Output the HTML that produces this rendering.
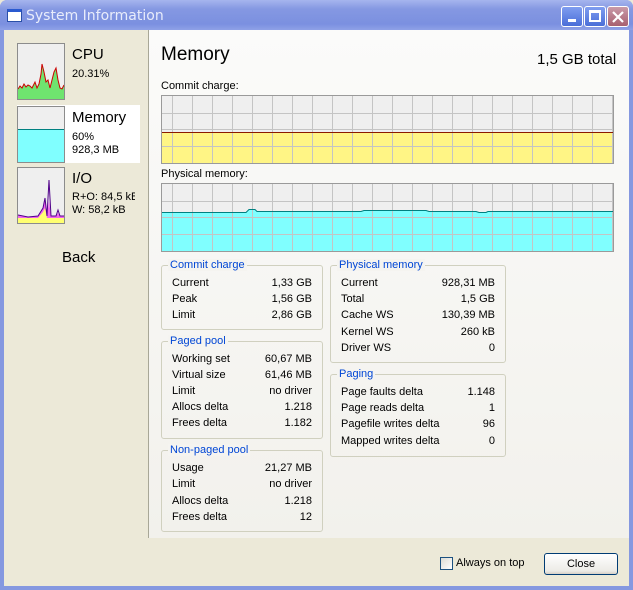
<!DOCTYPE html>
<html><head><meta charset="utf-8"><style>
*{margin:0;padding:0;box-sizing:border-box}
body{width:633px;height:590px;overflow:hidden;font-family:Tahoma,"Liberation Sans",sans-serif;font-size:11px;color:#000;position:relative;background:#ece9d8}
.a{position:absolute}
.frame{left:0;top:0;width:633px;height:590px;background:#8598e0;border-radius:7px 7px 0 0}
.title{left:0;top:0;width:633px;height:30px;border-radius:7px 7px 0 0;background:linear-gradient(#a6b5ee,#8598e2 30%,#7b90e0 80%,#8fa1e6)}
.client{left:4px;top:30px;width:625px;height:556px;background:#ece9d8}
.right{left:148px;top:30px;width:481px;height:508px;background:linear-gradient(#fbfbfa,#f2f1ec);border-left:1px solid #a8a797}
.thumb{width:48px;height:57px;border:1px solid #8c8c8c;background:#efefef;overflow:hidden}
.gb{border:1px solid #d0d0bf;border-radius:3px}
.gt{color:#0046d5;background:#f5f4f0;padding:0 2px;top:-7px;left:6px;position:absolute;white-space:nowrap}
.row{position:absolute;left:10px;right:10px;height:16px}
.row span:last-child{position:absolute;right:0}
.btn{width:22px;height:21px;border:1px solid #fff;border-radius:3px;top:6px}
</style></head><body>
<div class="a frame"></div>
<div class="a title"></div>
<div class="a" style="left:7px;top:9px;width:15px;height:13px;background:#fff;border:1px solid #2a4fa8;border-top:3px solid #2a5ad0"></div>
<div class="a" style="left:26px;top:8px;color:#e8ecfb;font-size:14px;font-family:'DejaVu Sans',sans-serif">System Information</div>
<div class="a btn" style="left:561px;background:linear-gradient(#7f9df0,#4a6ed8)"><div class="a" style="left:6px;top:12px;width:8px;height:3px;background:#fff"></div></div>
<div class="a btn" style="left:584px;background:linear-gradient(#7f9df0,#4a6ed8)"><div class="a" style="left:4px;top:3px;width:12px;height:12px;border:2px solid #fff;border-top-width:3px"></div></div>
<div class="a btn" style="left:607px;background:linear-gradient(#c99aa8,#a8606f)"><svg class="a" style="left:4px;top:4px" width="12" height="12"><path d="M1 1L11 11M11 1L1 11" stroke="#fff" stroke-width="2.2"/></svg></div>
<div class="a client"></div>
<div class="a right"></div>

<!-- left list -->
<div class="a" style="left:17px;top:105px;width:123px;height:58px;background:#fff"></div>
<div class="a thumb" style="left:17px;top:43px"><svg width="46" height="55" viewBox="0 0 46 55"><polygon points="0,55 0,45 2,42 4,44 6,40 8,43 10,41 12,42 14,44 17,38 19,44 21,40 23,30 24,20 26,28 28,38 30,36 32,44 34,36 36,28 38,24 40,36 42,44 44,45 46,41 46,55" fill="#6fe46f"/><polyline points="0,45 2,42 4,44 6,40 8,43 10,41 12,42 14,44 17,38 19,44 21,40 23,30 24,20 26,28 28,38 30,36 32,44 34,36 36,28 38,24 40,36 42,44 44,45 46,41" fill="none" stroke="#c00"/></svg></div>
<div class="a" style="left:72px;top:46px;font-size:15px">CPU</div>
<div class="a" style="left:72px;top:68px">20.31%</div>
<div class="a thumb" style="left:17px;top:106px"><div class="a" style="left:0;top:22px;width:46px;height:34px;background:#80ffff;border-top:1px solid #008080"></div></div>
<div class="a" style="left:72px;top:109px;font-size:15px">Memory</div>
<div class="a" style="left:72px;top:131px">60%</div>
<div class="a" style="left:72px;top:144px">928,3 MB</div>
<div class="a thumb" style="left:17px;top:167px"><svg width="46" height="55"><polygon points="0,55 0,47 10,49 20,48 25,40 27,30 29,48 31,33 33,48 38,48 40,45 42,48 46,48 46,55" fill="#ee66ee"/><polygon points="0,55 0,50 20,50 25,44 27,40 29,50 46,50 46,55" fill="#ffff70"/><polyline points="0,47 10,49 20,48 25,40 27,30 29,48 31,12 33,48 38,48 40,42 42,48 46,48" fill="none" stroke="#50008a"/></svg></div>
<div class="a" style="left:72px;top:170px;font-size:15px">I/O</div>
<div class="a" style="left:72px;top:191px;width:63px;overflow:hidden;white-space:nowrap">R+O: 84,5 kB</div>
<div class="a" style="left:72px;top:204px">W: 58,2 kB</div>
<div class="a" style="left:62px;top:249px;font-size:15px">Back</div>

<!-- right header -->
<div class="a" style="left:161px;top:44px;font-size:19px;font-family:'Liberation Sans',sans-serif">Memory</div>
<div class="a" style="left:537px;top:51px;font-size:15px">1,5 GB total</div>
<div class="a" style="left:161px;top:80px">Commit charge:</div>
<svg class="a" style="left:161px;top:95px" width="453" height="69">
<rect x="0" y="0" width="453" height="69" fill="#efefef"/>
<rect x="0" y="37" width="453" height="32" fill="#fff585"/>
<g stroke="#c4c4c4"><path d="M11.5 0V69M31.5 0V69M51.5 0V69M71.5 0V69M91.5 0V69M111.5 0V69M131.5 0V69M151.5 0V69M171.5 0V69M191.5 0V69M211.5 0V69M231.5 0V69M251.5 0V69M271.5 0V69M291.5 0V69M311.5 0V69M331.5 0V69M351.5 0V69M371.5 0V69M391.5 0V69M411.5 0V69M431.5 0V69M451.5 0V69M0 18.5H453M0 34.5H453M0 51.5H453"/></g>
<path d="M0 37.5H453" stroke="#8b1a00"/>
<rect x=".5" y=".5" width="452" height="68" fill="none" stroke="#9a9a9a"/>
</svg>
<div class="a" style="left:161px;top:168px">Physical memory:</div>
<svg class="a" style="left:161px;top:183px" width="453" height="69">
<rect x="0" y="0" width="453" height="69" fill="#efefef"/>
<polygon points="0,29 85,29 88,26 94,26 96,28 200,28 203,27 265,27 268,28 315,28 318,29 325,29 327,28 453,28 453,69 0,69" fill="#80ffff"/>
<g stroke="#c4c4c4"><path d="M11.5 0V69M31.5 0V69M51.5 0V69M71.5 0V69M91.5 0V69M111.5 0V69M131.5 0V69M151.5 0V69M171.5 0V69M191.5 0V69M211.5 0V69M231.5 0V69M251.5 0V69M271.5 0V69M291.5 0V69M311.5 0V69M331.5 0V69M351.5 0V69M371.5 0V69M391.5 0V69M411.5 0V69M431.5 0V69M451.5 0V69M0 18.5H453M0 34.5H453M0 51.5H453"/></g>
<polyline points="0,29.5 85,29.5 88,26.5 94,26.5 96,28.5 200,28.5 203,27.5 265,27.5 268,28.5 315,28.5 318,29.5 325,29.5 327,28.5 453,28.5" fill="none" stroke="#008080"/>
<rect x=".5" y=".5" width="452" height="68" fill="none" stroke="#9a9a9a"/>
</svg>

<!-- groups -->
<div class="a gb" style="left:161px;top:265px;width:162px;height:65px"><span class="gt">Commit charge</span>
<div class="row" style="top:11px"><span>Current</span><span>1,33 GB</span></div>
<div class="row" style="top:27px"><span>Peak</span><span>1,56 GB</span></div>
<div class="row" style="top:43px"><span>Limit</span><span>2,86 GB</span></div></div>
<div class="a gb" style="left:161px;top:341px;width:162px;height:98px"><span class="gt">Paged pool</span>
<div class="row" style="top:11px"><span>Working set</span><span>60,67 MB</span></div>
<div class="row" style="top:27px"><span>Virtual size</span><span>61,46 MB</span></div>
<div class="row" style="top:43px"><span>Limit</span><span>no driver</span></div>
<div class="row" style="top:59px"><span>Allocs delta</span><span>1.218</span></div>
<div class="row" style="top:75px"><span>Frees delta</span><span>1.182</span></div></div>
<div class="a gb" style="left:161px;top:450px;width:162px;height:82px"><span class="gt">Non-paged pool</span>
<div class="row" style="top:11px"><span>Usage</span><span>21,27 MB</span></div>
<div class="row" style="top:27px"><span>Limit</span><span>no driver</span></div>
<div class="row" style="top:44px"><span>Allocs delta</span><span>1.218</span></div>
<div class="row" style="top:60px"><span>Frees delta</span><span>12</span></div></div>
<div class="a gb" style="left:330px;top:265px;width:176px;height:98px"><span class="gt">Physical memory</span>
<div class="row" style="top:11px"><span>Current</span><span>928,31 MB</span></div>
<div class="row" style="top:27px"><span>Total</span><span>1,5 GB</span></div>
<div class="row" style="top:43px"><span>Cache WS</span><span>130,39 MB</span></div>
<div class="row" style="top:60px"><span>Kernel WS</span><span>260 kB</span></div>
<div class="row" style="top:76px"><span>Driver WS</span><span>0</span></div></div>
<div class="a gb" style="left:330px;top:374px;width:176px;height:83px"><span class="gt">Paging</span>
<div class="row" style="top:11px"><span>Page faults delta</span><span>1.148</span></div>
<div class="row" style="top:27px"><span>Page reads delta</span><span>1</span></div>
<div class="row" style="top:43px"><span>Pagefile writes delta</span><span>96</span></div>
<div class="row" style="top:60px"><span>Mapped writes delta</span><span>0</span></div></div>

<!-- bottom -->
<div class="a" style="left:440px;top:557px;width:13px;height:13px;border:1px solid #1c5180;background:linear-gradient(135deg,#dcdcd5,#fff)"></div>
<div class="a" style="left:456px;top:557px">Always on top</div>
<div class="a" style="left:544px;top:553px;width:74px;height:22px;border:1px solid #003c74;border-radius:3px;background:linear-gradient(#fff,#ecebe6 85%,#d6d0c5);text-align:center;line-height:20px">Close</div>
</body></html>
